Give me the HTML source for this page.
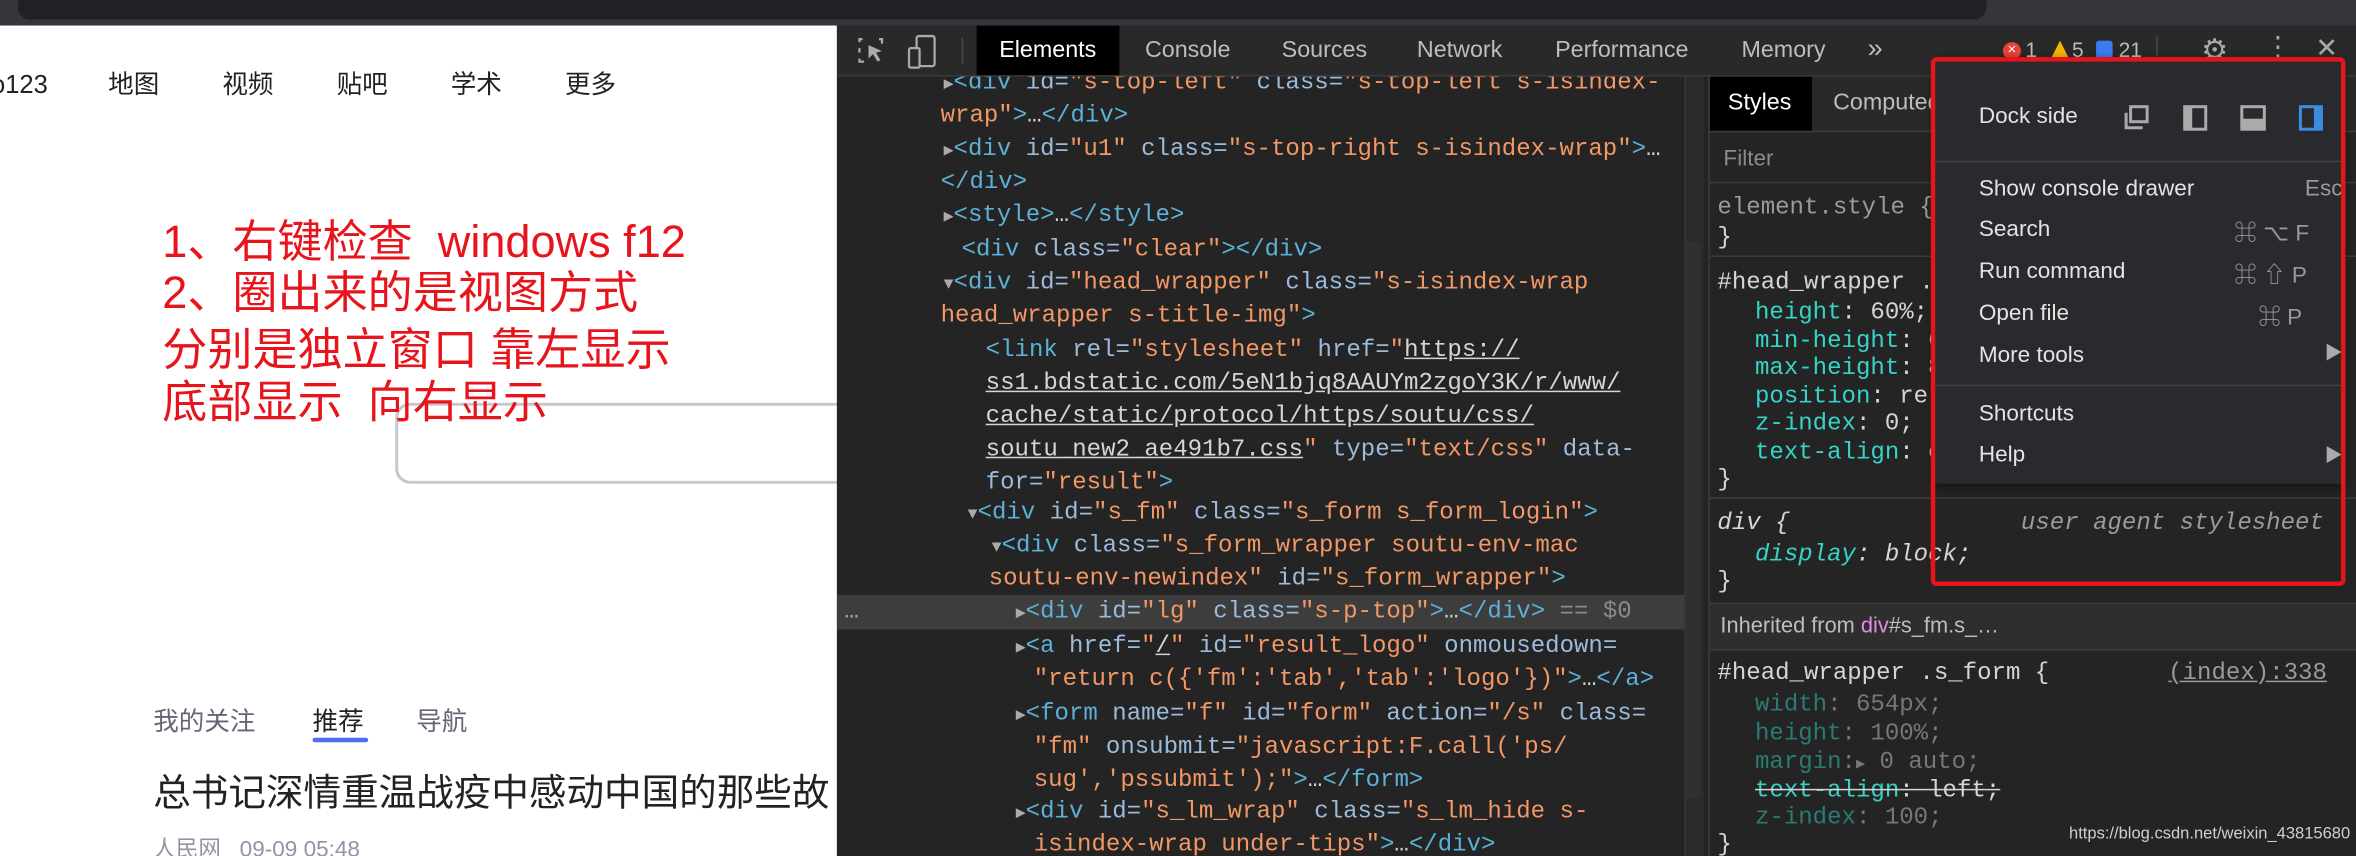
<!DOCTYPE html>
<html><head><meta charset="utf-8">
<style>
html,body{margin:0;padding:0;width:2356px;height:856px;overflow:hidden;background:#fff}
#w{position:absolute;left:0;top:0;width:1568px;height:570px;transform:scale(1.50255);transform-origin:0 0;overflow:hidden;background:#fff;font-family:"Liberation Sans","Noto Sans CJK SC",sans-serif}
.ab{position:absolute;white-space:nowrap}
.nav{top:46px;font-size:17px;color:#222;line-height:22px}
.red{left:108px;font-size:30px;color:#e8141c;line-height:34px;font-family:"Liberation Sans","Noto Sans CJK SC",sans-serif}
#dt{position:absolute;left:557px;top:17px;width:1011px;height:553px;background:#242424}
.code{font-family:"Liberation Mono","DejaVu Sans Mono",monospace;font-size:16px;line-height:22px;height:22px;color:#d5d5d5}
.t{color:#5db0d7}.n{color:#9bbbdc}.v{color:#f29766}.u{color:#d5d5d5;text-decoration:underline}
.ar{color:#aaa;font-size:11px}
.k{color:#35d4c7}.g{color:#8a8a8a}
.mi{font-size:15px;color:#e3e3e3}
.tab{top:8px;font-size:15.5px;color:#bdbdbd}
</style></head><body><div id="w">
<div class="ab" style="left:0;top:0;width:1568px;height:17px;background:#35363a"></div>
<div class="ab" style="left:12px;top:0;width:1310px;height:13px;background:#202124;border-radius:0 0 8px 8px"></div>

<div class="ab nav" style="left:-6px">o123</div>
<div class="ab nav" style="left:72px">地图</div>
<div class="ab nav" style="left:148px">视频</div>
<div class="ab nav" style="left:224px">贴吧</div>
<div class="ab nav" style="left:300px">学术</div>
<div class="ab nav" style="left:376px">更多</div>

<div class="ab" style="left:263px;top:268px;width:320px;height:54px;border:2px solid #c4c7ce;border-right:none;border-radius:10px 0 0 10px;box-sizing:border-box"></div>
<div class="ab red" style="top:145px">1、右键检查&nbsp; windows f12</div>
<div class="ab red" style="top:179px">2、圈出来的是视图方式</div>
<div class="ab red" style="top:217px">分别是独立窗口 靠左显示</div>
<div class="ab red" style="top:252px">底部显示&nbsp; 向右显示</div>

<div class="ab" style="left:102px;top:466px;font-size:17px;color:#626675">我的关注</div>
<div class="ab" style="left:208px;top:466px;font-size:17px;color:#222">推荐</div>
<div class="ab" style="left:208px;top:491px;width:37px;height:3px;background:#4e6ef2;border-radius:2px"></div>
<div class="ab" style="left:277px;top:466px;font-size:17px;color:#626675">导航</div>
<div class="ab" style="left:102px;top:508px;font-size:25px;color:#222">总书记深情重温战疫中感动中国的那些故</div>
<div class="ab" style="left:102px;top:554px;font-size:15px;color:#9195a3">人民网&nbsp;&nbsp;&nbsp;09-09 05:48</div>

<div id="dt">
 <div class="ab" style="left:0;top:0;width:1011px;height:33px;background:#292929;border-bottom:1px solid #3d3d3d"></div>
 <svg class="ab" style="left:14px;top:8px" width="22" height="20" viewBox="0 0 22 20"><path d="M1 3V1h2M1 7v3M1 14v2h3M14 1h2v3" stroke="#aaa" fill="none" stroke-width="1.5"/><path d="M7 5l9 4-4 1 3 5-2 1-3-5-3 3z" fill="#aaa"/></svg>
 <svg class="ab" style="left:47px;top:6px" width="20" height="24" viewBox="0 0 20 24"><rect x="6" y="1" width="12" height="20" rx="1.5" stroke="#aaa" fill="none" stroke-width="1.5"/><rect x="1" y="9" width="7" height="13" rx="1" stroke="#aaa" fill="#292929" stroke-width="1.5"/></svg>
 <div class="ab" style="left:83px;top:8px;width:1px;height:18px;background:#4a4a4a"></div>
 <div class="ab" style="left:93px;top:0;width:95px;height:33px;background:#000"></div>
 <div class="ab tab" style="left:108px;color:#fff">Elements</div>
 <div class="ab tab" style="left:205px">Console</div>
 <div class="ab tab" style="left:296px">Sources</div>
 <div class="ab tab" style="left:386px">Network</div>
 <div class="ab tab" style="left:478px">Performance</div>
 <div class="ab tab" style="left:602px">Memory</div>
 <div class="ab tab" style="left:686px;font-size:18px;top:5px">»</div>
 <div class="ab" style="left:776px;top:11px;width:12px;height:12px;border-radius:6px;background:#e8433b;color:#fff;font-size:10px;text-align:center;line-height:12px">×</div>
 <div class="ab" style="left:791px;top:8px;font-size:14px;color:#bdbdbd">1</div>
 <div class="ab" style="left:808px;top:10px;width:0;height:0;border-left:6px solid transparent;border-right:6px solid transparent;border-bottom:12px solid #f4b400"></div>
 <div class="ab" style="left:822px;top:8px;font-size:14px;color:#bdbdbd">5</div>
 <div class="ab" style="left:838px;top:10px;width:11px;height:12px;background:#3b7cf0;border-radius:2px"></div>
 <div class="ab" style="left:853px;top:8px;font-size:14px;color:#bdbdbd">21</div>
 <div class="ab" style="left:878px;top:7px;width:1px;height:20px;background:#4a4a4a"></div>
 <div class="ab" style="left:908px;top:4px;font-size:20px;color:#aaa">⚙</div>
 <div class="ab" style="left:950px;top:4px;font-size:18px;color:#aaa">⋮</div>
 <div class="ab" style="left:984px;top:5px;font-size:18px;color:#aaa">✕</div>

 <div class="ab" style="left:0;top:34px;width:580px;height:519px;overflow:hidden;background:#242424">
  <div class="ab" style="left:0;top:345px;width:565px;height:23px;background:#3d3d3d"></div>
  <div class="ab" style="left:564px;top:0;width:12px;height:519px;background:#2b2b2b;border-left:1px solid #383838"></div>
  <div class="ab" style="left:565px;top:110px;width:10px;height:370px;background:#303030"></div>
 </div>
 <div class="ab" style="left:0;top:34px;width:565px;height:519px;overflow:hidden">
  <div class="ab code" style="left:71px;top:-7px"><span class="ar">▶</span><span class="t">&lt;div</span> <span class="n">id=</span><span class="v">"s-top-left"</span> <span class="n">class=</span><span class="v">"s-top-left s-isindex-</span></div>
  <div class="ab code" style="left:69px;top:15px"><span class="v">wrap"</span><span class="t">&gt;</span>…<span class="t">&lt;/div&gt;</span></div>
  <div class="ab code" style="left:71px;top:37px"><span class="ar">▶</span><span class="t">&lt;div</span> <span class="n">id=</span><span class="v">"u1"</span> <span class="n">class=</span><span class="v">"s-top-right s-isindex-wrap"</span><span class="t">&gt;</span>…</div>
  <div class="ab code" style="left:69px;top:59px"><span class="t">&lt;/div&gt;</span></div>
  <div class="ab code" style="left:71px;top:81px"><span class="ar">▶</span><span class="t">&lt;style&gt;</span>…<span class="t">&lt;/style&gt;</span></div>
  <div class="ab code" style="left:83px;top:104px"><span class="t">&lt;div</span> <span class="n">class=</span><span class="v">"clear"</span><span class="t">&gt;&lt;/div&gt;</span></div>
  <div class="ab code" style="left:71px;top:126px"><span class="ar">▼</span><span class="t">&lt;div</span> <span class="n">id=</span><span class="v">"head_wrapper"</span> <span class="n">class=</span><span class="v">"s-isindex-wrap</span></div>
  <div class="ab code" style="left:69px;top:148px"><span class="v">head_wrapper s-title-img"</span><span class="t">&gt;</span></div>
  <div class="ab code" style="left:99px;top:171px"><span class="t">&lt;link</span> <span class="n">rel=</span><span class="v">"stylesheet"</span> <span class="n">href=</span><span class="v">"</span><span class="u">https://</span></div>
  <div class="ab code" style="left:99px;top:193px"><span class="u">ss1.bdstatic.com/5eN1bjq8AAUYm2zgoY3K/r/www/</span></div>
  <div class="ab code" style="left:99px;top:215px"><span class="u">cache/static/protocol/https/soutu/css/</span></div>
  <div class="ab code" style="left:99px;top:237px"><span class="u">soutu_new2_ae491b7.css</span><span class="v">"</span> <span class="n">type=</span><span class="v">"text/css"</span> <span class="n">data-</span></div>
  <div class="ab code" style="left:99px;top:259px"><span class="n">for=</span><span class="v">"result"</span><span class="t">&gt;</span></div>
  <div class="ab code" style="left:87px;top:279px"><span class="ar">▼</span><span class="t">&lt;div</span> <span class="n">id=</span><span class="v">"s_fm"</span> <span class="n">class=</span><span class="v">"s_form s_form_login"</span><span class="t">&gt;</span></div>
  <div class="ab code" style="left:103px;top:301px"><span class="ar">▼</span><span class="t">&lt;div</span> <span class="n">class=</span><span class="v">"s_form_wrapper soutu-env-mac</span></div>
  <div class="ab code" style="left:101px;top:323px"><span class="v">soutu-env-newindex"</span> <span class="n">id=</span><span class="v">"s_form_wrapper"</span><span class="t">&gt;</span></div>
  <div class="ab code" style="left:5px;top:345px;color:#aaa">…</div>
  <div class="ab code" style="left:119px;top:345px"><span class="ar">▶</span><span class="t">&lt;div</span> <span class="n">id=</span><span class="v">"lg"</span> <span class="n">class=</span><span class="v">"s-p-top"</span><span class="t">&gt;</span>…<span class="t">&lt;/div&gt;</span> <span class="g">== $0</span></div>
  <div class="ab code" style="left:119px;top:368px"><span class="ar">▶</span><span class="t">&lt;a</span> <span class="n">href=</span><span class="v">"</span><span class="u">/</span><span class="v">"</span> <span class="n">id=</span><span class="v">"result_logo"</span> <span class="n">onmousedown=</span></div>
  <div class="ab code" style="left:131px;top:390px"><span class="v">"return c({'fm':'tab','tab':'logo'})"</span><span class="t">&gt;</span>…<span class="t">&lt;/a&gt;</span></div>
  <div class="ab code" style="left:119px;top:413px"><span class="ar">▶</span><span class="t">&lt;form</span> <span class="n">name=</span><span class="v">"f"</span> <span class="n">id=</span><span class="v">"form"</span> <span class="n">action=</span><span class="v">"/s"</span> <span class="n">class=</span></div>
  <div class="ab code" style="left:131px;top:435px"><span class="v">"fm"</span> <span class="n">onsubmit=</span><span class="v">"javascript:F.call('ps/</span></div>
  <div class="ab code" style="left:131px;top:457px"><span class="v">sug','pssubmit');"</span><span class="t">&gt;</span>…<span class="t">&lt;/form&gt;</span></div>
  <div class="ab code" style="left:119px;top:478px"><span class="ar">▶</span><span class="t">&lt;div</span> <span class="n">id=</span><span class="v">"s_lm_wrap"</span> <span class="n">class=</span><span class="v">"s_lm_hide s-</span></div>
  <div class="ab code" style="left:131px;top:500px"><span class="v">isindex-wrap under-tips"</span><span class="t">&gt;</span>…<span class="t">&lt;/div&gt;</span></div>
 </div>

 <div class="ab" style="left:580px;top:34px;width:431px;height:519px;background:#242424;border-left:1px solid #3d3d3d;overflow:hidden">
  <div class="ab" style="left:0;top:0;width:431px;height:36px;background:#292929;border-bottom:1px solid #3d3d3d"></div>
  <div class="ab" style="left:0;top:0;width:68px;height:36px;background:#000"></div>
  <div class="ab" style="left:12px;top:9px;font-size:15.5px;color:#fff">Styles</div>
  <div class="ab" style="left:82px;top:9px;font-size:15.5px;color:#bdbdbd">Computed</div>
  <div class="ab" style="left:9px;top:46px;font-size:15px;color:#8a8a8a">Filter</div>
  <div class="ab" style="left:0;top:70px;width:431px;height:1px;background:#3d3d3d"></div>
  <div class="ab code" style="left:5px;top:76px;color:#9a9a9a">element.style {</div>
  <div class="ab code" style="left:5px;top:96px">}</div>
  <div class="ab" style="left:0;top:119px;width:431px;height:1px;background:#3d3d3d"></div>
  <div class="ab code" style="left:5px;top:126px">#head_wrapper .s_form {</div>
  <div class="ab code" style="left:30px;top:146px"><span class="k">height</span>: 60%;</div>
  <div class="ab code" style="left:30px;top:165px"><span class="k">min-height</span>: 600px;</div>
  <div class="ab code" style="left:30px;top:183px"><span class="k">max-height</span>: 800px;</div>
  <div class="ab code" style="left:30px;top:202px"><span class="k">position</span>: relative;</div>
  <div class="ab code" style="left:30px;top:220px"><span class="k">z-index</span>: 0;</div>
  <div class="ab code" style="left:30px;top:239px"><span class="k">text-align</span>: center;</div>
  <div class="ab code" style="left:5px;top:257px">}</div>
  <div class="ab" style="left:0;top:280px;width:431px;height:1px;background:#3d3d3d"></div>
  <div class="ab code" style="left:5px;top:286px;font-style:italic">div {</div>
  <div class="ab code" style="left:207px;top:286px;font-style:italic;color:#9a9a9a">user agent stylesheet</div>
  <div class="ab code" style="left:30px;top:307px;font-style:italic"><span class="k">display</span>: block;</div>
  <div class="ab code" style="left:5px;top:325px">}</div>
  <div class="ab" style="left:0;top:350px;width:431px;height:30px;background:#2e2e2e;border-top:1px solid #3d3d3d;border-bottom:1px solid #3d3d3d"></div>
  <div class="ab" style="left:7px;top:358px;font-size:14.5px;color:#bdbdbd">Inherited from <span style="color:#e28ee8">div</span>#s_fm.s_…</div>
  <div class="ab code" style="left:5px;top:386px">#head_wrapper .s_form {</div>
  <div class="ab code" style="left:305px;top:386px;color:#9a9a9a;text-decoration:underline">(index):338</div>
  <div class="ab code" style="left:30px;top:407px;color:#777"><span style="color:#2a7b73">width</span>: 654px;</div>
  <div class="ab code" style="left:30px;top:426px;color:#777"><span style="color:#2a7b73">height</span>: 100%;</div>
  <div class="ab code" style="left:30px;top:445px;color:#777"><span style="color:#2a7b73">margin</span>:<span style="font-size:10px">▶</span> 0 auto;</div>
  <div class="ab code" style="left:30px;top:464px;text-decoration:line-through"><span class="k">text-align</span>: left;</div>
  <div class="ab code" style="left:30px;top:482px;color:#777"><span style="color:#2a7b73">z-index</span>: 100;</div>
  <div class="ab code" style="left:5px;top:500px">}</div>
 </div>

 <div class="ab" style="left:730px;top:21px;width:273px;height:284px;background:#292a2d;box-shadow:0 2px 6px rgba(0,0,0,.5)"></div>
 <div class="ab mi" style="left:760px;top:52px">Dock side</div>
 <svg class="ab" style="left:855px;top:52px" width="140" height="20" viewBox="0 0 140 20">
  <rect x="6" y="2" width="11" height="10" fill="none" stroke="#aaa" stroke-width="2"/><path d="M3 6v10h11" fill="none" stroke="#aaa" stroke-width="2"/>
  <rect x="42" y="2" width="14" height="15" fill="none" stroke="#aaa" stroke-width="2"/><rect x="42" y="2" width="5" height="15" fill="#aaa"/>
  <rect x="80" y="2" width="15" height="15" fill="none" stroke="#aaa" stroke-width="2"/><rect x="80" y="10" width="15" height="7" fill="#aaa"/>
  <rect x="119" y="2" width="14" height="15" fill="none" stroke="#3b8be0" stroke-width="2"/><rect x="128" y="2" width="5" height="15" fill="#3b8be0"/>
 </svg>
 <div class="ab" style="left:730px;top:90px;width:273px;height:1px;background:#444"></div>
 <div class="ab mi" style="left:760px;top:100px">Show console drawer</div><div class="ab mi" style="left:977px;top:100px;color:#999">Esc</div>
 <div class="ab mi" style="left:760px;top:127px">Search</div><div class="ab mi" style="left:930px;top:127px;color:#999">⌘ ⌥ F</div>
 <div class="ab mi" style="left:760px;top:155px">Run command</div><div class="ab mi" style="left:930px;top:155px;color:#999">⌘ ⇧ P</div>
 <div class="ab mi" style="left:760px;top:183px">Open file</div><div class="ab mi" style="left:946px;top:183px;color:#999">⌘ P</div>
 <div class="ab mi" style="left:760px;top:211px">More tools</div><div class="ab mi" style="left:990px;top:209px;color:#aaa;font-size:12px">▶</div>
 <div class="ab" style="left:730px;top:239px;width:273px;height:1px;background:#444"></div>
 <div class="ab mi" style="left:760px;top:250px">Shortcuts</div>
 <div class="ab mi" style="left:760px;top:277px">Help</div><div class="ab mi" style="left:990px;top:277px;color:#aaa;font-size:12px">▶</div>
 <div class="ab" style="left:728px;top:21px;width:276px;height:352px;border:3px solid #e8141c;border-radius:4px;box-sizing:border-box"></div>
 <div class="ab" style="left:820px;top:532px;font-size:11px;color:#cfcfcf">https://blog.csdn.net/weixin_43815680</div>
</div>
</div></body></html>
